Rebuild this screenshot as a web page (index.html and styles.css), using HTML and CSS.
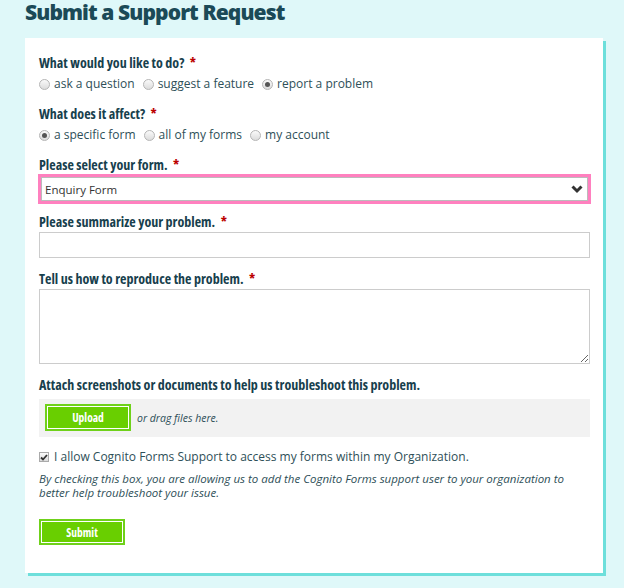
FILE: index.html
```html
<!DOCTYPE html>
<html lang="en">
<head>
  <meta charset="UTF-8" />
  <title>Submit a Support Request</title>
  <link rel="stylesheet" href="styles.css">
</head>
<body>
  <h1>Submit a Support Request</h1>
  <form class="card">
    <div class="field">
      <label class="label">What would you like to do? <span class="req">*</span></label>
      <div class="choices">
        <span class="choice"><span class="radio"></span>ask a question</span>
        <span class="choice"><span class="radio"></span>suggest a feature</span>
        <span class="choice"><span class="radio checked"></span>report a problem</span>
      </div>
    </div>

    <div class="field">
      <label class="label">What does it affect? <span class="req">*</span></label>
      <div class="choices">
        <span class="choice"><span class="radio checked"></span>a specific form</span>
        <span class="choice"><span class="radio"></span>all of my forms</span>
        <span class="choice"><span class="radio"></span>my account</span>
      </div>
    </div>

    <div class="field">
      <label class="label">Please select your form. <span class="req">*</span></label>
      <div class="select">
        <span>Enquiry Form</span>
        <svg class="chevron" width="12" height="9" viewBox="0 0 12 9"><polyline points="1.5,1.5 6,6 10.5,1.5" fill="none" stroke="#333" stroke-width="3"/></svg>
      </div>
    </div>

    <div class="field">
      <label class="label">Please summarize your problem. <span class="req">*</span></label>
      <input class="input" type="text">
    </div>

    <div class="field">
      <label class="label">Tell us how to reproduce the problem. <span class="req">*</span></label>
      <textarea class="textarea"></textarea>
    </div>

    <div class="field upload">
      <label class="label">Attach screenshots or documents to help us troubleshoot this problem.</label>
      <div class="dropzone">
        <span class="btn">Upload</span>
        <span class="drag">or drag files here.</span>
      </div>
    </div>

    <div class="consent">
      <span class="checkbox">
        <svg width="8" height="7" viewBox="0 0 8 7"><polyline points="1,3.5 3,5.5 7,1" fill="none" stroke="#333" stroke-width="1.8"/></svg>
      </span>
      I allow Cognito Forms Support to access my forms within my Organization.
    </div>
    <p class="help">By checking this box, you are allowing us to add the Cognito Forms support user to your organization to better help troubleshoot your issue.</p>

    <span class="btn submit">Submit</span>
  </form>
</body>
</html>
```

FILE: styles.css
```css
body {
  margin: 0;
  padding: 0 18px 12px 25px;
  background: #dff8f9;
  font-family: 'Open Sans', sans-serif;
  color: #2e4f58;
}

h1 {
  margin: 0;
  height: 38px;
  font-size: 21px;
  line-height: 24px;
  font-weight: 800;
  letter-spacing: -0.9px;
  color: #1b4a57;
}

.card {
  display: block;
  width: 578px;
  box-sizing: border-box;
  background: #fff;
  padding: 16px 13px 28px 14px;
  box-shadow: 3px 3px 0 #6ddfdb;
}

.field {
  margin-bottom: 12px;
}

.field.upload {
  margin-bottom: 11px;
}

.label {
  display: block;
  font-family: 'Open Sans', sans-serif;
  font-stretch: 75%;
  font-weight: 700;
  font-size: 14px;
  line-height: 18px;
  color: #17404d;
  margin-bottom: 1px;
}

.req {
  color: #b00;
  margin-left: 3px;
}

.choices {
  display: flex;
  gap: 8px;
  margin-top: 3px;
  font-size: 12px;
  line-height: 18px;
}

.choice {
  display: flex;
  align-items: center;
  gap: 4px;
}

.radio {
  width: 9px;
  height: 9px;
  border-radius: 50%;
  border: 1px solid #b5b5b5;
  background: linear-gradient(#fafafa, #dcdcdc);
  display: flex;
  align-items: center;
  justify-content: center;
}

.radio.checked::after {
  content: "";
  width: 5px;
  height: 5px;
  border-radius: 50%;
  background: #555;
}

.select {
  display: flex;
  align-items: center;
  justify-content: space-between;
  box-sizing: border-box;
  height: 24px;
  margin: 3px 2px 0;
  padding: 0 4px 0 3px;
  border: 1px solid #bbb;
  box-shadow: 0 0 0 3px #ff80bf;
  font-size: 11.5px;
  color: #333;
}

.input, .textarea {
  display: block;
  width: 100%;
  box-sizing: border-box;
  border: 1px solid #ccc;
  margin: 0;
  font-family: 'Open Sans', sans-serif;
}

.input {
  height: 26px;
}

.textarea {
  height: 75px;
}

.dropzone {
  display: flex;
  align-items: center;
  gap: 6px;
  margin-top: 5px;
  background: #f2f2f2;
  padding: 5px 6px 6px;
}

.btn {
  display: inline-flex;
  align-items: center;
  justify-content: center;
  width: 86px;
  height: 27px;
  background: #69cf00;
  box-shadow: inset 0 0 0 2px #6fd11a, inset 0 0 0 3px #fff;
  color: #fff;
  font-family: 'Open Sans', sans-serif;
  font-stretch: 75%;
  font-weight: 700;
  font-size: 11.5px;
}

.drag {
  font-style: italic;
  font-size: 10.5px;
  color: #2e4f58;
}

.consent {
  display: flex;
  align-items: center;
  gap: 5px;
  font-size: 12px;
  line-height: 18px;
}

.checkbox {
  width: 10px;
  height: 10px;
  box-sizing: border-box;
  border: 1px solid #aaa;
  background: linear-gradient(#fafafa, #dcdcdc);
  display: flex;
  align-items: center;
  justify-content: center;
}

.help {
  margin: 6px 0 19px;
  font-style: italic;
  font-size: 11.5px;
  line-height: 14px;
}

.submit {
  display: flex;
  height: 26px;
}
```
